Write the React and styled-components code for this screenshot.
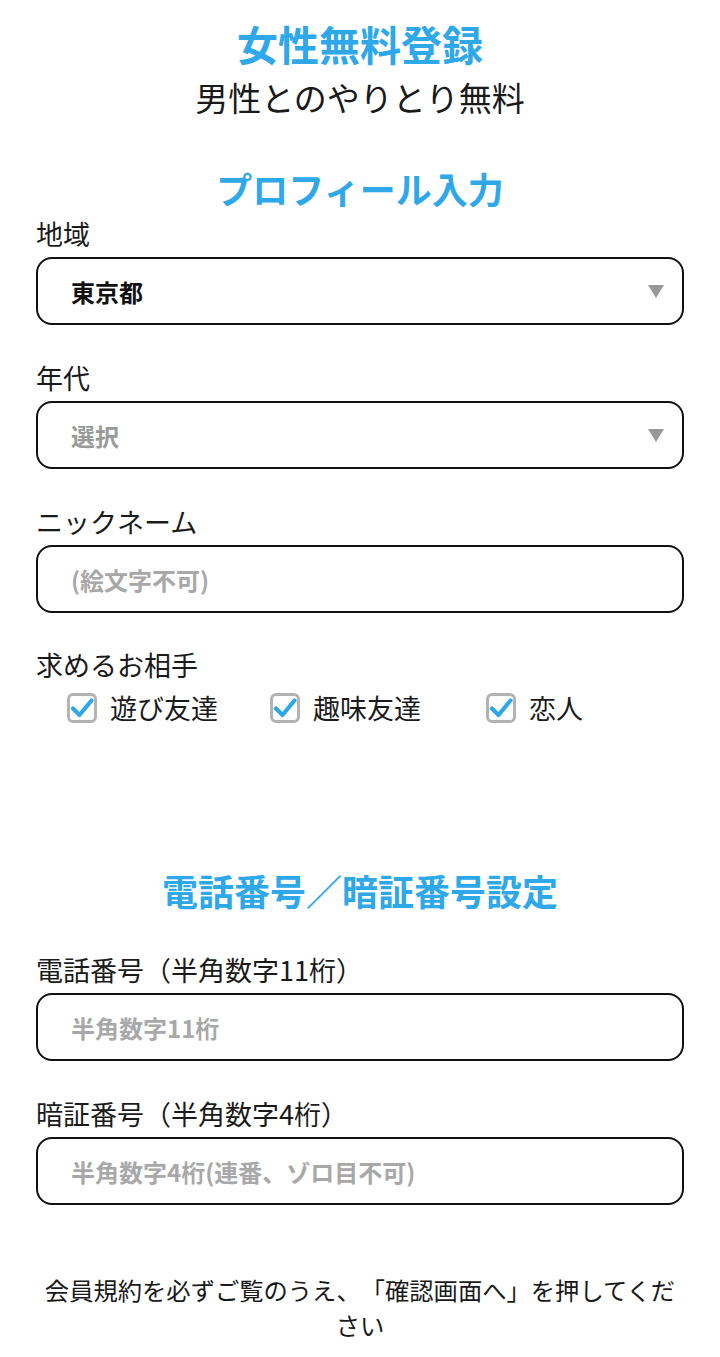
import { useState } from "react";
import styled, { createGlobalStyle } from "styled-components";

const GlobalStyle = createGlobalStyle`
    body {
        margin: 0;
        background: #fff;
        font-family: "Noto Sans CJK JP", "Noto Sans", sans-serif;
        color: #1a1a1a;
        text-spacing-trim: space-all;
    }
`;

const BLUE = "#2fa8ea";

const Page = styled.div`
    display: flex;
    flex-direction: column;
    width: 720px;
    padding: 21px 36px 20px;
    box-sizing: border-box;
`;

const Title = styled.h1`
    margin: 0;
    text-align: center;
    font-size: 41px;
    line-height: 44px;
    font-weight: 700;
    color: ${BLUE};
`;

const Subtitle = styled.p`
    margin: 12px 0 0;
    text-align: center;
    font-size: 33px;
    line-height: 40px;
    font-weight: 400;
`;

const SectionTitle = styled.h2`
    margin: ${({ top }) => top}px 0 ${({ bottom }) => bottom}px;
    text-align: center;
    font-size: 36px;
    line-height: 40px;
    font-weight: 700;
    color: ${BLUE};
`;

const Field = styled.div`
    display: flex;
    flex-direction: column;
    gap: 8px;
    margin-bottom: ${({ gap }) => gap}px;
`;

const Label = styled.label`
    font-size: 27px;
    line-height: 30px;
    white-space: nowrap;
`;

const Box = styled.div`
    display: flex;
    align-items: center;
    height: 68px;
    border: 2px solid #111;
    border-radius: 16px;
    box-sizing: border-box;
    padding: 0 18px 0 33px;
    background: #fff;
`;

const Select = styled.select`
    flex: 1;
    appearance: none;
    border: none;
    outline: none;
    background: transparent;
    padding: 0;
    font-family: inherit;
    font-size: 24px;
    font-weight: 700;
    color: ${({ empty }) => (empty ? "#9a9a9a" : "#111")};
`;

const Arrow = styled.span`
    width: 0;
    height: 0;
    border-left: 8px solid transparent;
    border-right: 8px solid transparent;
    border-top: 13px solid #999;
`;

const Input = styled.input`
    flex: 1;
    border: none;
    outline: none;
    background: transparent;
    padding: 0;
    font-family: inherit;
    font-size: 24px;
    font-weight: 700;
    color: #111;
    &::placeholder {
        color: #a8a8a8;
    }
`;

const CheckRow = styled.div`
    display: flex;
    align-items: center;
    padding-left: 31px;
    margin-top: 10px;
    height: 36px;
`;

const CheckItem = styled.label`
    display: flex;
    align-items: center;
    gap: 13px;
    width: ${({ w }) => (w ? `${w}px` : "auto")};
    font-size: 27px;
    line-height: 30px;
`;

const CheckBox = styled.span`
    display: flex;
    align-items: center;
    justify-content: center;
    width: 30px;
    height: 30px;
    box-sizing: border-box;
    border: 3px solid #b3b3b3;
    border-radius: 6px;
    background: #fff;
`;

const Note = styled.p`
    margin: 67px 0 0;
    padding: 0 8px;
    text-align: center;
    font-size: 24.3px;
    line-height: 35px;
`;

function Check({ label, w }) {
    return (
        <CheckItem w={w}>
            <CheckBox>
                <svg width="24" height="22" viewBox="0 0 24 22">
                    <path
                        d="M3 11.5 L9.5 18 L21.5 3.5"
                        fill="none"
                        stroke={BLUE}
                        strokeWidth="4.2"
                        strokeLinecap="round"
                        strokeLinejoin="round"
                    />
                </svg>
            </CheckBox>
            {label}
        </CheckItem>
    );
}

export default function App() {
    const [area, setArea] = useState("tokyo");
    const [age, setAge] = useState("");

    return (
        <Page>
            <GlobalStyle />
            <Title>女性無料登録</Title>
            <Subtitle>男性とのやりとり無料</Subtitle>

            <SectionTitle top={51} bottom={11}>
                プロフィール入力
            </SectionTitle>

            <Field gap={38}>
                <Label>地域</Label>
                <Box>
                    <Select value={area} onChange={(e) => setArea(e.target.value)}>
                        <option value="tokyo">東京都</option>
                        <option value="kanagawa">神奈川県</option>
                    </Select>
                    <Arrow />
                </Box>
            </Field>

            <Field gap={38}>
                <Label>年代</Label>
                <Box>
                    <Select empty={!age} value={age} onChange={(e) => setAge(e.target.value)}>
                        <option value="">選択</option>
                        <option value="20">20代</option>
                    </Select>
                    <Arrow />
                </Box>
            </Field>

            <Field gap={37}>
                <Label>ニックネーム</Label>
                <Box>
                    <Input placeholder="(絵文字不可)" />
                </Box>
            </Field>

            <Label>求めるお相手</Label>
            <CheckRow>
                <Check label="遊び友達" w={203} />
                <Check label="趣味友達" w={216} />
                <Check label="恋人" />
            </CheckRow>

            <SectionTitle top={144} bottom={45}>
                電話番号／暗証番号設定
            </SectionTitle>

            <Field gap={38}>
                <Label>電話番号（半角数字11桁）</Label>
                <Box>
                    <Input placeholder="半角数字11桁" />
                </Box>
            </Field>

            <Field gap={0}>
                <Label>暗証番号（半角数字4桁）</Label>
                <Box>
                    <Input placeholder="半角数字4桁(連番、ゾロ目不可)" />
                </Box>
            </Field>

            <Note>会員規約を必ずご覧のうえ、「確認画面へ」を押してください</Note>
        </Page>
    );
}
